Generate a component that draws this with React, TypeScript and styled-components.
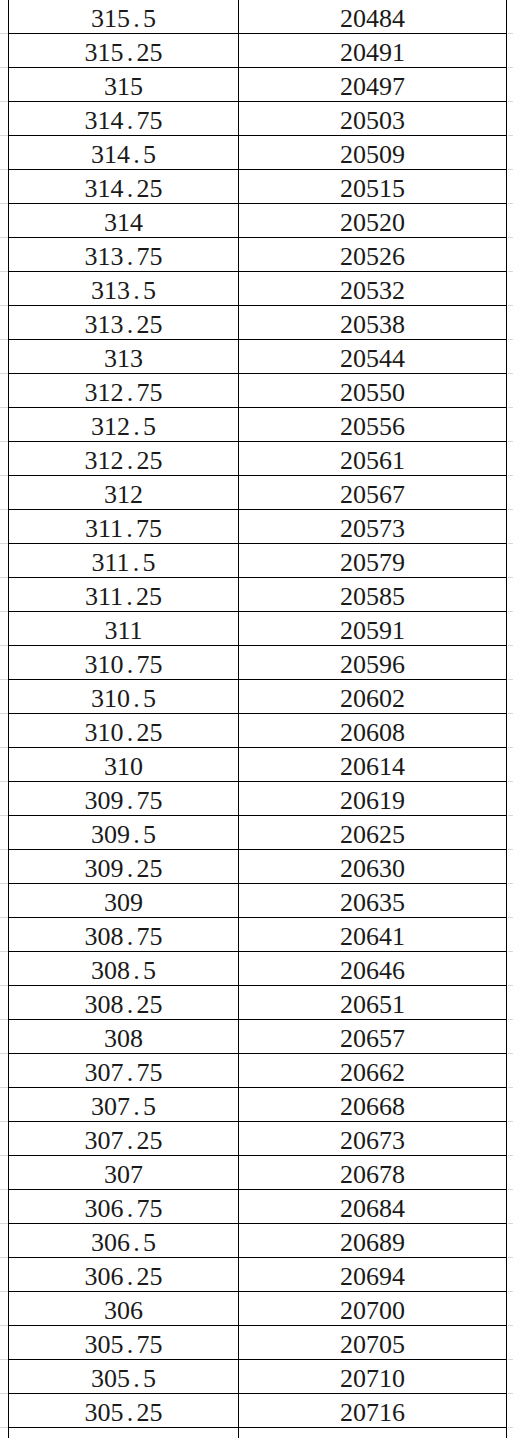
import React from "react"
import styled, { createGlobalStyle } from "styled-components"

const rows: [string, number][] = [
  ["315.5", 20484], ["315.25", 20491], ["315", 20497], ["314.75", 20503],
  ["314.5", 20509], ["314.25", 20515], ["314", 20520], ["313.75", 20526],
  ["313.5", 20532], ["313.25", 20538], ["313", 20544], ["312.75", 20550],
  ["312.5", 20556], ["312.25", 20561], ["312", 20567], ["311.75", 20573],
  ["311.5", 20579], ["311.25", 20585], ["311", 20591], ["310.75", 20596],
  ["310.5", 20602], ["310.25", 20608], ["310", 20614], ["309.75", 20619],
  ["309.5", 20625], ["309.25", 20630], ["309", 20635], ["308.75", 20641],
  ["308.5", 20646], ["308.25", 20651], ["308", 20657], ["307.75", 20662],
  ["307.5", 20668], ["307.25", 20673], ["307", 20678], ["306.75", 20684],
  ["306.5", 20689], ["306.25", 20694], ["306", 20700], ["305.75", 20705],
  ["305.5", 20710], ["305.25", 20716],
]

const GlobalStyle = createGlobalStyle`
  html, body {
    margin: 0;
    padding: 0;
    background: #fff;
  }
`

// spreadsheet gridlines outside the bordered range
const Sheet = styled.div`
  width: 513px;
  height: 1438px;
  overflow: hidden;
  background: repeating-linear-gradient(to bottom, transparent 0 33px, #d9d9d9 33px 34px);
`

const Table = styled.div`
  margin-left: 8px;
  width: 499px;
  border-left: 1px solid #000;
  background: #fff;
`

const Row = styled.div`
  display: grid;
  grid-template-columns: 230px 268px;
`

const Cell = styled.div`
  box-sizing: border-box;
  height: 34px;
  padding-top: 5px;
  border-right: 1px solid #000;
  border-bottom: 1px solid #000;
  display: flex;
  align-items: center;
  justify-content: center;
  font-family: "Liberation Serif", "DejaVu Serif", serif;
  font-size: 26px;
  line-height: 28px;
  color: #1a1a1a;
  white-space: nowrap;
`

const Dot = styled.span`
  display: inline-block;
  width: 0.5em;
  text-align: center;
`

function Num({ value }: { value: string }) {
  const [a, b] = value.split(".")
  return <span>{a}{b !== undefined && <><Dot>.</Dot>{b}</>}</span>
}

export default function App() {
  return <>
    <GlobalStyle/>
    <Sheet>
      <Table>
        {rows.map(([k, v], i) => (
          <Row key={i + 'row'}>
            <Cell><Num value={k}/></Cell>
            <Cell>{v}</Cell>
          </Row>
        ))}
        <Row>
          <Cell/>
          <Cell/>
        </Row>
      </Table>
    </Sheet>
  </>
}
